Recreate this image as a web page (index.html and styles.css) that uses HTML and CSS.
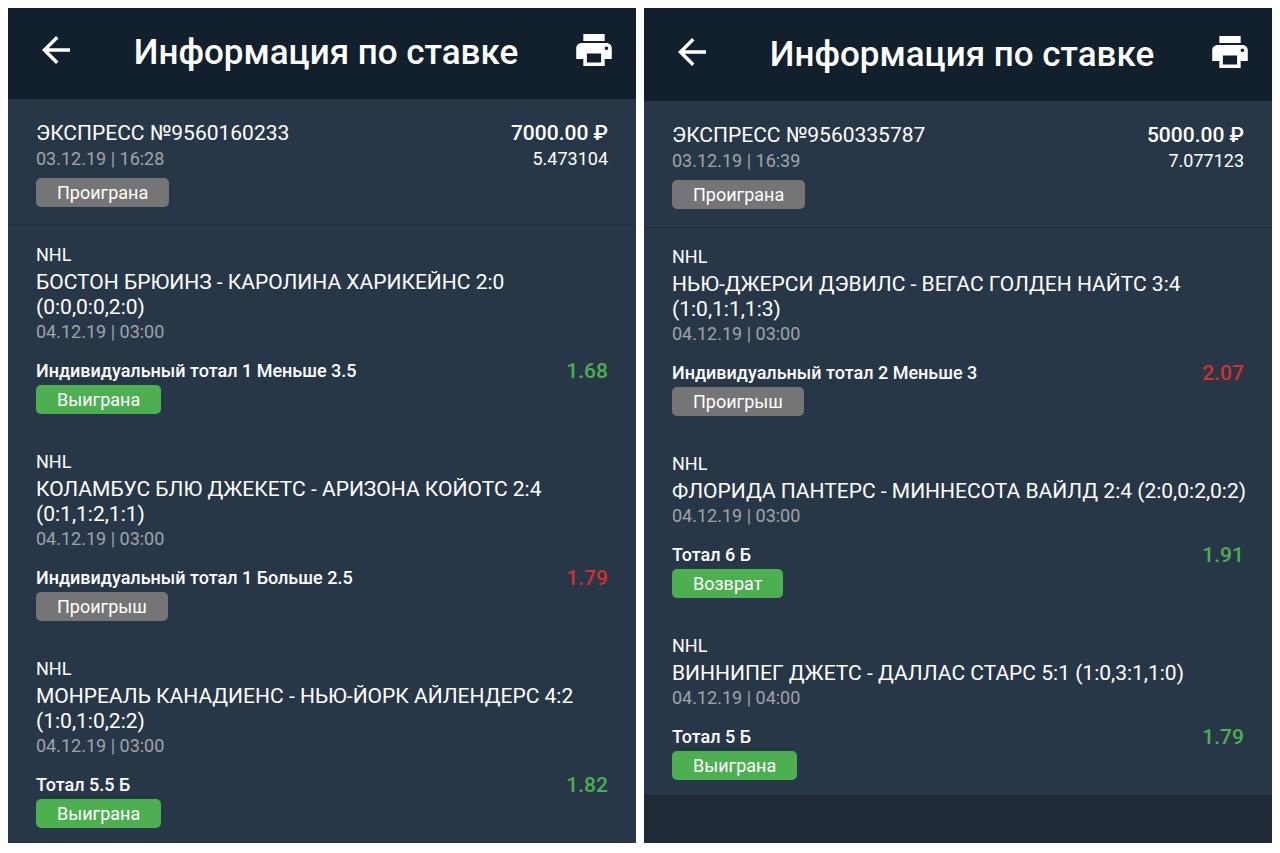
FILE: index.html
```html
<!DOCTYPE html>
<html lang="ru">
<head>
  <meta charset="UTF-8">
  <meta name="viewport" content="width=device-width, initial-scale=1">
  <title>Информация по ставке</title>
  <link rel="stylesheet" href="styles.css">
</head>
<body>
  <svg class="sprite" aria-hidden="true">
    <symbol id="icon-back" viewBox="4 4 16 16">
      <path d="M20 11H7.83l5.59-5.59L12 4l-8 8 8 8 1.41-1.41L7.83 13H20v-2z"/>
    </symbol>
    <symbol id="icon-print" viewBox="2 3 20 18">
      <path d="M19 8H5c-1.66 0-3 1.34-3 3v6h4v4h12v-4h4v-6c0-1.66-1.34-3-3-3zm-3 11H8v-5h8v5zm3-7c-.55 0-1-.45-1-1s.45-1 1-1 1 .45 1 1-.45 1-1 1zm-1-9H6v4h12V3z"/>
    </symbol>
  </svg>

  <main class="screens">
    <section class="screen">
      <header class="topbar">
        <button type="button" class="icon-btn back" aria-label="Назад"><svg class="icon-back"><use href="#icon-back"/></svg></button>
        <h1>Информация по ставке</h1>
        <button type="button" class="icon-btn" aria-label="Печать"><svg class="icon-print"><use href="#icon-print"/></svg></button>
      </header>

      <div class="summary">
        <div>
          <div class="name">ЭКСПРЕСС №9560160233</div>
          <div class="date">03.12.19 | 16:28</div>
          <span class="badge lost">Проиграна</span>
        </div>
        <div class="totals">
          <div class="sum">7000.00 ₽</div>
          <div class="coef">5.473104</div>
        </div>
      </div>

      <div class="events">
        <article class="event">
          <div class="league">NHL</div>
          <div class="match">БОСТОН БРЮИНЗ - КАРОЛИНА ХАРИКЕЙНС 2:0 (0:0,0:0,2:0)</div>
          <div class="date">04.12.19 | 03:00</div>
          <div class="bet"><span class="market">Индивидуальный тотал 1 Меньше 3.5</span><span class="odds green">1.68</span></div>
          <span class="badge won">Выиграна</span>
        </article>
        <article class="event">
          <div class="league">NHL</div>
          <div class="match">КОЛАМБУС БЛЮ ДЖЕКЕТС - АРИЗОНА КОЙОТС 2:4 (0:1,1:2,1:1)</div>
          <div class="date">04.12.19 | 03:00</div>
          <div class="bet"><span class="market">Индивидуальный тотал 1 Больше 2.5</span><span class="odds red">1.79</span></div>
          <span class="badge lost">Проигрыш</span>
        </article>
        <article class="event">
          <div class="league">NHL</div>
          <div class="match">МОНРЕАЛЬ КАНАДИЕНС - НЬЮ-ЙОРК АЙЛЕНДЕРС 4:2 (1:0,1:0,2:2)</div>
          <div class="date">04.12.19 | 03:00</div>
          <div class="bet"><span class="market">Тотал 5.5 Б</span><span class="odds green">1.82</span></div>
          <span class="badge won">Выиграна</span>
        </article>
      </div>
    </section>

    <section class="screen">
      <header class="topbar tall">
        <button type="button" class="icon-btn back" aria-label="Назад"><svg class="icon-back"><use href="#icon-back"/></svg></button>
        <h1>Информация по ставке</h1>
        <button type="button" class="icon-btn" aria-label="Печать"><svg class="icon-print"><use href="#icon-print"/></svg></button>
      </header>

      <div class="summary">
        <div>
          <div class="name">ЭКСПРЕСС №9560335787</div>
          <div class="date">03.12.19 | 16:39</div>
          <span class="badge lost">Проиграна</span>
        </div>
        <div class="totals">
          <div class="sum">5000.00 ₽</div>
          <div class="coef">7.077123</div>
        </div>
      </div>

      <div class="events">
        <article class="event">
          <div class="league">NHL</div>
          <div class="match">НЬЮ-ДЖЕРСИ ДЭВИЛС - ВЕГАС ГОЛДЕН НАЙТС 3:4 (1:0,1:1,1:3)</div>
          <div class="date">04.12.19 | 03:00</div>
          <div class="bet"><span class="market">Индивидуальный тотал 2 Меньше 3</span><span class="odds red">2.07</span></div>
          <span class="badge lost">Проигрыш</span>
        </article>
        <article class="event">
          <div class="league">NHL</div>
          <div class="match">ФЛОРИДА ПАНТЕРС - МИННЕСОТА ВАЙЛД 2:4 (2:0,0:2,0:2)</div>
          <div class="date">04.12.19 | 03:00</div>
          <div class="bet"><span class="market">Тотал 6 Б</span><span class="odds green">1.91</span></div>
          <span class="badge won">Возврат</span>
        </article>
        <article class="event">
          <div class="league">NHL</div>
          <div class="match">ВИННИПЕГ ДЖЕТС - ДАЛЛАС СТАРС 5:1 (1:0,3:1,1:0)</div>
          <div class="date">04.12.19 | 04:00</div>
          <div class="bet"><span class="market">Тотал 5 Б</span><span class="odds green">1.79</span></div>
          <span class="badge won">Выиграна</span>
        </article>
      </div>
    </section>
  </main>
</body>
</html>
```
FILE: styles.css
```css
* {
  box-sizing: border-box;
}
body {
  margin: 0;
  padding: 8px;
  background: #fff;
  color: #fff;
  font-family: Roboto, sans-serif;
  font-size: 18px;
  line-height: 24px;
}
.sprite {
  display: none;
}
.screens {
  display: grid;
  grid-template-columns: 1fr 1fr;
  gap: 8px;
}
.screen {
  background: #1f2a37;
}

/* Top bar */
.topbar {
  display: flex;
  align-items: flex-start;
  justify-content: space-between;
  padding: 23px 24px 24px 34px;
  background: #11202c;
}
.topbar.tall {
  padding-top: 25px;
}
h1 {
  margin: 0;
  font-size: 35px;
  line-height: 44px;
  font-weight: 500;
}
.icon-btn {
  display: flex;
  align-items: center;
  height: 38px;
  padding: 0;
  border: none;
  background: none;
  color: #fff;
  cursor: pointer;
}
.icon-btn.back {
  padding-right: 6px;
}
.icon-btn svg {
  fill: currentColor;
}
.icon-back {
  width: 28px;
  height: 28px;
}
.icon-print {
  width: 36px;
  height: 32px;
}

/* Coupon summary */
.summary {
  display: flex;
  justify-content: space-between;
  padding: 21px 28px 18px;
  background: #283747;
  border-bottom: 1px solid #212d3b;
}
.name,
.sum {
  font-size: 21px;
  line-height: 26px;
}
.sum {
  font-weight: 500;
}
.totals {
  text-align: right;
}
.date {
  color: #a0a4aa;
}
.summary .date,
.coef {
  line-height: 26px;
}
.summary .badge {
  margin-top: 6px;
}

/* Events */
.events {
  display: flex;
  flex-direction: column;
  gap: 36px;
  padding: 17px 22px 15px 28px;
  background: #283747;
}
.screen:last-child .events {
  border-bottom: 1px solid #1b2531;
}
.match {
  margin-top: 3px;
  font-size: 21px;
  line-height: 25px;
}
.bet {
  display: flex;
  justify-content: space-between;
  margin-top: 14px;
  padding-right: 6px;
  line-height: 26px;
  font-weight: 500;
}
.odds {
  font-size: 21px;
}
.green {
  color: #4caf50;
}
.red {
  color: #d32f2f;
}
.badge {
  display: block;
  width: fit-content;
  margin-top: 1px;
  padding: 0 21px;
  border-radius: 5px;
  line-height: 29px;
}
.won {
  background: #4caf50;
}
.lost {
  background: #757575;
}
```
